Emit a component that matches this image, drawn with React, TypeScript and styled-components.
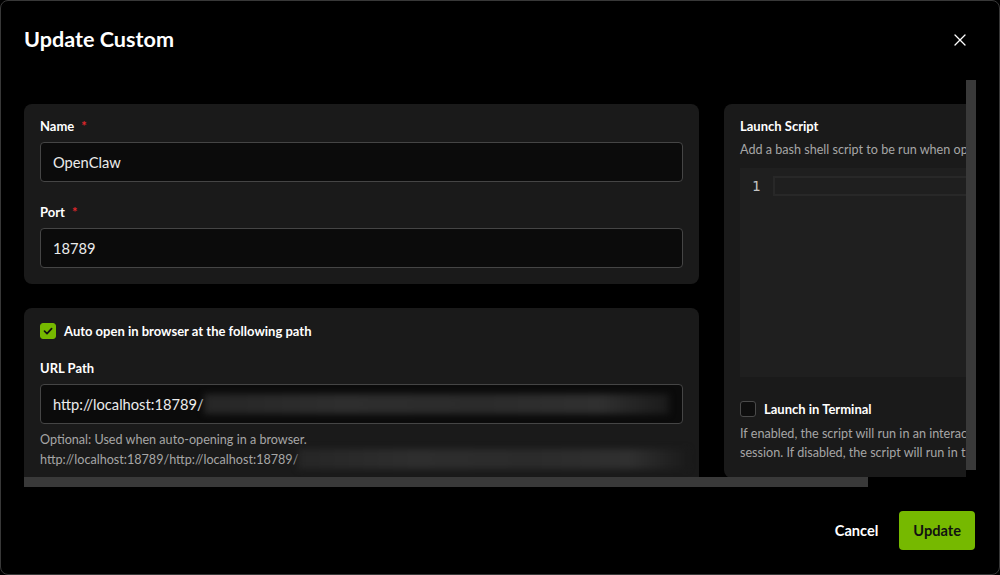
import React from 'react';
import styled, { createGlobalStyle } from 'styled-components';

const VIEW_W = 942;
const VIEW_H = 397;
const CONTENT_W = 1051;
const CONTENT_H = 404;

const GlobalStyle = createGlobalStyle`
  html, body {
    margin: 0;
    padding: 0;
    background: #000;
  }
  body {
    font-family: Lato, "Liberation Sans", sans-serif;
    color: #fff;
  }
  * {
    box-sizing: border-box;
  }
`;

const Dialog = styled.div`
  width: 1000px;
  height: 575px;
  background: #000;
  border: 1px solid #383838;
  border-radius: 8px;
  display: flex;
  flex-direction: column;
  overflow: hidden;
`;

const Header = styled.header`
  height: 79px;
  flex: none;
  display: flex;
  align-items: center;
  justify-content: space-between;
  padding: 0 27px 3px 23px;
`;

const Title = styled.h2`
  margin: 0;
  font-size: 21.6px;
  font-weight: 700;
  color: #fff;
`;

const CloseButton = styled.button`
  width: 24px;
  height: 24px;
  display: flex;
  align-items: center;
  justify-content: center;
  background: none;
  border: none;
  padding: 0;
  margin-top: 1px;
  color: #fff;
  cursor: pointer;
`;

const ScrollFrame = styled.div`
  flex: none;
  margin: 0 23px;
  display: grid;
  grid-template-columns: ${VIEW_W}px 10px;
  grid-template-rows: ${VIEW_H}px 10px;
`;

const Viewport = styled.div`
  overflow: hidden;
`;

const ScrollTrack = styled.div<{ $dir: 'v' | 'h' }>`
  background: #000;
  display: flex;
  flex-direction: ${p => (p.$dir === 'v' ? 'column' : 'row')};
`;

const Thumb = styled.div`
  flex: none;
  width: 100%;
  height: 100%;
  background: #393939;
`;

const Content = styled.div`
  display: grid;
  grid-template-columns: 675px 351px;
  column-gap: 25px;
  align-items: start;
  padding-top: 24px;
  width: ${CONTENT_W}px;
`;

const Column = styled.div`
  display: flex;
  flex-direction: column;
  gap: 24px;
`;

const Panel = styled.section`
  background: #1a1a1a;
  border-radius: 8px;
  padding: 14px 16px 16px;
  display: flex;
  flex-direction: column;
`;

const Field = styled.div<{ $gap?: number }>`
  display: flex;
  flex-direction: column;
  margin-top: ${p => p.$gap ?? 0}px;
`;

const Label = styled.label`
  font-size: 13px;
  line-height: 16px;
  font-weight: 700;
  color: #fff;
  margin-bottom: 8px;
`;

const Required = styled.span`
  color: #e0262c;
  margin-left: 7px;
`;

const InputBox = styled.div`
  height: 40px;
  background: #0b0b0b;
  border: 1px solid #454545;
  border-radius: 4px;
  padding: 0 12px;
  display: flex;
  align-items: center;
  font-size: 14.7px;
  color: #ececec;
  white-space: nowrap;
  overflow: hidden;
`;

const Redacted = styled.span<{ $w: number }>`
  display: inline-block;
  flex: none;
  width: ${p => p.$w}px;
  height: 20px;
  vertical-align: middle;
  background: linear-gradient(90deg, #262626, #2e2e2e 30%, #2b2b2b 60%, #303030 85%, #1a1a1a);
  filter: blur(3px);
`;

const HelpText = styled.div<{ $mt?: number }>`
  margin-top: ${p => p.$mt ?? 0}px;
  font-size: 12.6px;
  line-height: 19px;
  color: #a6a6a6;
`;

const HelpLine = styled.div`
  white-space: nowrap;
  display: flex;
  align-items: center;
`;

const CheckRow = styled.label<{ $mt?: number }>`
  display: flex;
  align-items: center;
  gap: 8px;
  margin-top: ${p => p.$mt ?? 0}px;
  font-size: 13px;
  line-height: 16px;
  font-weight: 700;
  color: #fff;
`;

const CheckBox = styled.span<{ $checked?: boolean }>`
  width: 16px;
  height: 16px;
  flex: none;
  border-radius: 3px;
  display: flex;
  align-items: center;
  justify-content: center;
  background: ${p => (p.$checked ? '#76b900' : '#0e0e0e')};
  border: 1px solid ${p => (p.$checked ? '#76b900' : '#4a4a4a')};
`;

const Editor = styled.div`
  margin-top: 9px;
  height: 209px;
  background: #1f1f1f;
  padding-top: 8px;
`;

const EditorLine = styled.div`
  display: flex;
  align-items: center;
  height: 20px;
`;

const LineNo = styled.span`
  width: 33px;
  padding-left: 12px;
  font-family: "DejaVu Sans Mono", "Liberation Mono", monospace;
  font-size: 14px;
  color: #c4c4c4;
`;

const ActiveLine = styled.span`
  flex: 1;
  height: 20px;
  border: 2px solid #282828;
`;

const Footer = styled.footer`
  flex: 1;
  display: flex;
  justify-content: flex-end;
  align-items: center;
  gap: 9px;
  padding: 0 24px;
`;

const GhostButton = styled.button`
  height: 39px;
  padding: 0 12px;
  background: none;
  border: none;
  font-family: inherit;
  font-size: 14.6px;
  font-weight: 700;
  color: #fff;
  cursor: pointer;
`;

const PrimaryButton = styled.button`
  height: 39px;
  padding: 0 14px;
  background: #76b900;
  border: none;
  border-radius: 4px;
  font-family: inherit;
  font-size: 14.6px;
  font-weight: 700;
  color: #111;
  cursor: pointer;
`;

const CheckIcon = () => (
  <svg width="10" height="10" viewBox="0 0 10 10" fill="none">
    <path d="M1.5 5.2 L4 7.6 L8.6 2.6" stroke="#111" strokeWidth="1.7" strokeLinecap="round" strokeLinejoin="round" />
  </svg>
);

const CloseIcon = () => (
  <svg width="12" height="12" viewBox="0 0 12 12" fill="none">
    <path d="M1 1 L11 11 M11 1 L1 11" stroke="#fff" strokeWidth="1.3" strokeLinecap="round" />
  </svg>
);

export default function App() {
  // thumb sizes follow the ratio of the visible area to the content
  const vThumb = Math.round((VIEW_H * VIEW_H) / CONTENT_H);
  const hThumb = Math.round((VIEW_W * VIEW_W) / CONTENT_W);

  return (
    <>
      <GlobalStyle />
      <Dialog role="dialog" aria-label="Update Custom">
        <Header>
          <Title>Update Custom</Title>
          <CloseButton aria-label="Close">
            <CloseIcon />
          </CloseButton>
        </Header>

        <ScrollFrame>
          <Viewport>
            <Content>
              <Column>
                <Panel>
                  <Field>
                    <Label>
                      Name<Required>*</Required>
                    </Label>
                    <InputBox>OpenClaw</InputBox>
                  </Field>
                  <Field $gap={22}>
                    <Label>
                      Port<Required>*</Required>
                    </Label>
                    <InputBox>18789</InputBox>
                  </Field>
                </Panel>

                <Panel>
                  <CheckRow $mt={1}>
                    <CheckBox $checked>
                      <CheckIcon />
                    </CheckBox>
                    Auto open in browser at the following path
                  </CheckRow>
                  <Field $gap={21}>
                    <Label>URL Path</Label>
                    <InputBox>
                      http://localhost:18789/
                      <Redacted $w={465} />
                    </InputBox>
                  </Field>
                  <HelpText $mt={6}>
                    <HelpLine>Optional: Used when auto-opening in a browser.</HelpLine>
                    <HelpLine>
                      http://localhost:18789/http://localhost:18789/
                      <Redacted $w={390} />
                    </HelpLine>
                  </HelpText>
                </Panel>
              </Column>

              <Panel>
                <Label>Launch Script</Label>
                <HelpText $mt={-2}>Add a bash shell script to be run when opening the app.</HelpText>
                <Editor>
                  <EditorLine>
                    <LineNo>1</LineNo>
                    <ActiveLine />
                  </EditorLine>
                </Editor>
                <CheckRow $mt={24}>
                  <CheckBox />
                  Launch in Terminal
                </CheckRow>
                <HelpText $mt={7}>
                  If enabled, the script will run in an interactive terminal session. If disabled, the script
                  will run in the background.
                </HelpText>
              </Panel>
            </Content>
          </Viewport>
          <ScrollTrack $dir="v">
            <Thumb style={{ height: vThumb }} />
          </ScrollTrack>
          <ScrollTrack $dir="h">
            <Thumb style={{ width: hThumb }} />
          </ScrollTrack>
        </ScrollFrame>

        <Footer>
          <GhostButton>Cancel</GhostButton>
          <PrimaryButton>Update</PrimaryButton>
        </Footer>
      </Dialog>
    </>
  );
}
